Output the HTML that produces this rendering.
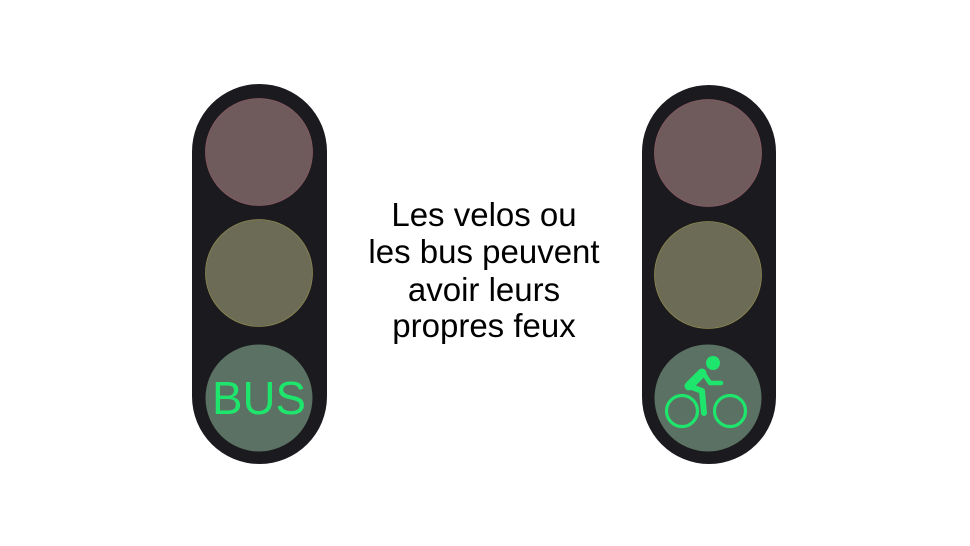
<!DOCTYPE html>
<html><head><style>html,body{margin:0;padding:0;background:#fff;width:970px;height:546px;overflow:hidden}</style></head>
<body>
<svg width="970" height="546" viewBox="0 0 970 546" xmlns="http://www.w3.org/2000/svg">
<rect width="970" height="546" fill="#fff"/>
<rect x="192" y="84" width="135" height="380" rx="67.5" fill="#1b1a1e"/>
<circle cx="259" cy="152" r="53.5" fill="#705b5c" stroke="#8a5c64" stroke-width="0.8"/>
<circle cx="259" cy="273" r="53.5" fill="#6c6b55" stroke="#8a8650" stroke-width="0.8"/>
<circle cx="259" cy="398" r="53.5" fill="#5b7163"/>
<text x="259" y="414" text-anchor="middle" font-family="Liberation Sans, sans-serif" font-size="46" fill="#1ee66c" textLength="94" lengthAdjust="spacingAndGlyphs">BUS</text>

<rect x="642" y="85" width="134" height="379" rx="67" fill="#1b1a1e"/>
<circle cx="708" cy="153" r="53.5" fill="#705b5c" stroke="#8a5c64" stroke-width="0.8"/>
<circle cx="708" cy="275" r="53.5" fill="#6c6b55" stroke="#8a8650" stroke-width="0.8"/>
<circle cx="708" cy="398" r="53.5" fill="#5b7163"/>
<g fill="none" stroke="#1ee66c">
<circle cx="682" cy="411" r="15.5" stroke-width="3.2"/>
<circle cx="730" cy="411" r="15.5" stroke-width="3.2"/>
<path d="M704 374 L710 383 L721 383" stroke-width="4.5" stroke-linecap="round" stroke-linejoin="round"/>
<path d="M702 373 L689 386" stroke-width="9" stroke-linecap="round"/>
<path d="M689 386 L702 391 L704 413" stroke-width="6" stroke-linecap="round" stroke-linejoin="round"/>
</g>
<circle cx="713" cy="363" r="7" fill="#1ee66c"/>

<g font-family="Liberation Sans, sans-serif" font-size="33" fill="#000" text-anchor="middle">
<text x="484" y="226">Les velos ou</text>
<text x="484" y="263">les bus peuvent</text>
<text x="484" y="301">avoir leurs</text>
<text x="484" y="337">propres feux</text>
</g>
</svg>
</body></html>
